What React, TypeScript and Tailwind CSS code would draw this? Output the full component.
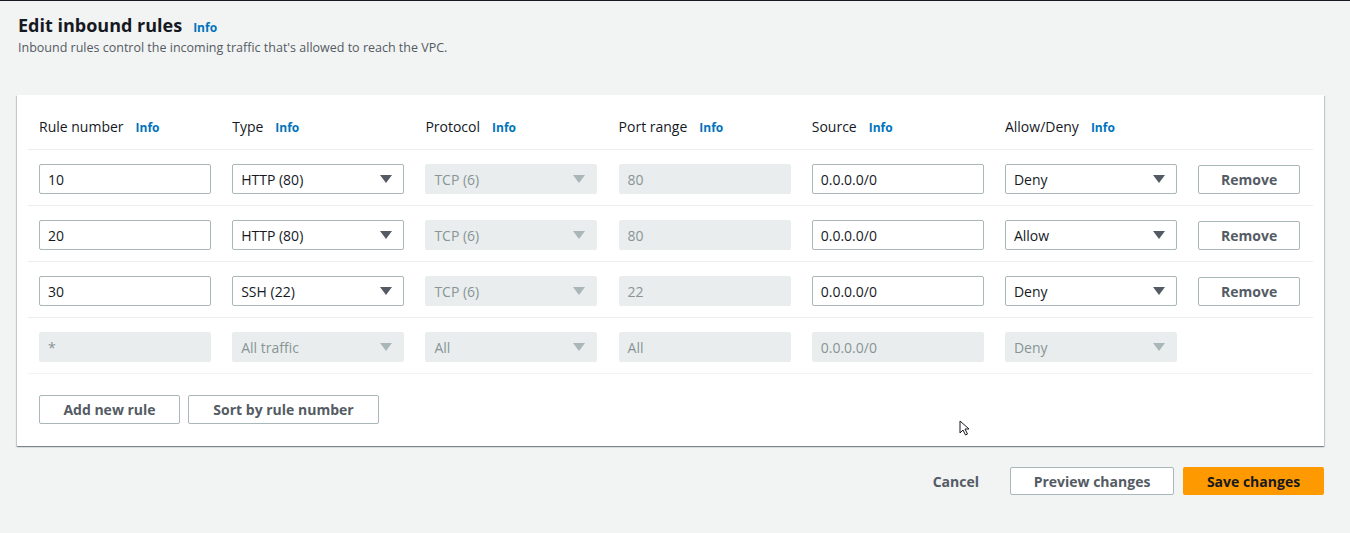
type Rule = {
  num: string
  type: string
  protocol: string
  port: string
  source: string
  action: string
  locked?: boolean
}

const rules: Rule[] = [
  { num: '10', type: 'HTTP (80)', protocol: 'TCP (6)', port: '80', source: '0.0.0.0/0', action: 'Deny' },
  { num: '20', type: 'HTTP (80)', protocol: 'TCP (6)', port: '80', source: '0.0.0.0/0', action: 'Allow' },
  { num: '30', type: 'SSH (22)', protocol: 'TCP (6)', port: '22', source: '0.0.0.0/0', action: 'Deny' },
  { num: '*', type: 'All traffic', protocol: 'All', port: 'All', source: '0.0.0.0/0', action: 'Deny', locked: true },
]

const headers = ['Rule number', 'Type', 'Protocol', 'Port range', 'Source', 'Allow/Deny']

const gridCols = 'grid grid-cols-[172px_172px_172px_172px_172px_172px_102px] gap-x-[21.2px]'

function Caret({ disabled }: { disabled?: boolean }) {
  return (
    <svg width="14" height="10" viewBox="0 0 14 10" className="shrink-0">
      <path d="M1 1 L13 1 L7 9 Z" fill={disabled ? '#aab7b8' : '#545b64'} />
    </svg>
  )
}

function TextInput({ value, disabled }: { value: string; disabled?: boolean }) {
  if (disabled) {
    return (
      <div className="flex h-[30px] items-center rounded-[2px] bg-[#eaeded] px-[9px] text-[14px] text-[#879596]">
        {value}
      </div>
    )
  }
  return (
    <div className="flex h-[30px] items-center rounded-[2px] border border-[#aab7b8] bg-white px-[8px] text-[14px] text-[#16191f]">
      {value}
    </div>
  )
}

function SelectBox({ value, disabled }: { value: string; disabled?: boolean }) {
  if (disabled) {
    return (
      <div className="flex h-[30px] items-center justify-between rounded-[2px] bg-[#eaeded] pl-[9px] pr-[11px] text-[14px] text-[#879596]">
        <span>{value}</span>
        <Caret disabled />
      </div>
    )
  }
  return (
    <div className="flex h-[30px] items-center justify-between rounded-[2px] border border-[#aab7b8] bg-white pl-[8px] pr-[10px] text-[14px] text-[#16191f]">
      <span>{value}</span>
      <Caret />
    </div>
  )
}

function Info() {
  return <span className="ml-[12px] text-[12px] font-bold text-[#0073bb]">Info</span>
}

export default function App() {
  return (
    <div
      className="relative h-[533px] w-[1350px] overflow-hidden border-t border-[#16191f] bg-[#f2f3f3] text-[#16191f]"
      style={{ fontFamily: '"Open Sans", "Liberation Sans", sans-serif' }}
    >
      <div className="pl-[18px] pt-[12px]">
        <div className="flex items-baseline">
          <h1 className="text-[18px] font-bold leading-[24px]">Edit inbound rules</h1>
          <span className="ml-[11px] text-[12px] font-bold text-[#0073bb]">Info</span>
        </div>
        <p className="mt-[3px] text-[12.5px] leading-[16px] text-[#545b64]">
          Inbound rules control the incoming traffic that's allowed to reach the VPC.
        </p>
      </div>

      <section className="ml-[17px] mt-[39px] h-[351px] w-[1307px] bg-white px-[11px] shadow-[0_1px_1px_0_rgba(0,28,36,0.3),1px_1px_1px_0_rgba(0,28,36,0.15),-1px_1px_1px_0_rgba(0,28,36,0.15)]">
        <div className={`${gridCols} h-[55px] items-center border-b border-[#eaeded] px-[11px] pt-[8px]`}>
          {headers.map((h) => (
            <div key={h} className="flex items-baseline text-[14px] text-[#16191f]">
              <span>{h}</span>
              <Info />
            </div>
          ))}
          <div />
        </div>

        {rules.map((r) => (
          <div
            key={r.num}
            className={`${gridCols} h-[56px] items-center border-b ${r.locked ? 'border-[#f2f3f3]' : 'border-[#eaeded]'} px-[11px] pt-[3px]`}
          >
            <TextInput value={r.num} disabled={r.locked} />
            <SelectBox value={r.type} disabled={r.locked} />
            <SelectBox value={r.protocol} disabled />
            <TextInput value={r.port} disabled />
            <TextInput value={r.source} disabled={r.locked} />
            <SelectBox value={r.action} disabled={r.locked} />
            {r.locked ? (
              <div />
            ) : (
              <button className="h-[29px] rounded-[2px] border border-[#aab7b8] bg-white text-[14px] font-bold text-[#545b64]">
                Remove
              </button>
            )}
          </div>
        ))}

        <div className="flex gap-[8px] px-[11px] pt-[21px]">
          <button className="h-[29px] w-[141px] rounded-[2px] border border-[#aab7b8] bg-white text-[14px] font-bold text-[#545b64]">
            Add new rule
          </button>
          <button className="h-[29px] w-[191px] rounded-[2px] border border-[#aab7b8] bg-white text-[14px] font-bold text-[#545b64]">
            Sort by rule number
          </button>
        </div>
      </section>

      <div className="mr-[26px] mt-[21px] flex items-center justify-end">
        <span className="mr-[31px] text-[14px] font-bold text-[#545b64]">Cancel</span>
        <button className="mr-[9px] h-[28px] w-[164px] rounded-[2px] border border-[#aab7b8] bg-white text-[14px] font-bold text-[#545b64]">
          Preview changes
        </button>
        <button className="h-[28px] w-[141px] rounded-[2px] bg-[#ff9900] text-[14px] font-bold text-[#16191f]">
          Save changes
        </button>
      </div>

      <svg className="absolute left-[959px] top-[419px]" width="12" height="16" viewBox="0 0 12 16">
        <path d="M1 1 L1 13 L4 10 L6.5 15 L8.5 14 L6 9 L10 9 Z" fill="white" stroke="#16191f" strokeWidth="1" strokeLinejoin="round" />
      </svg>
    </div>
  )
}
